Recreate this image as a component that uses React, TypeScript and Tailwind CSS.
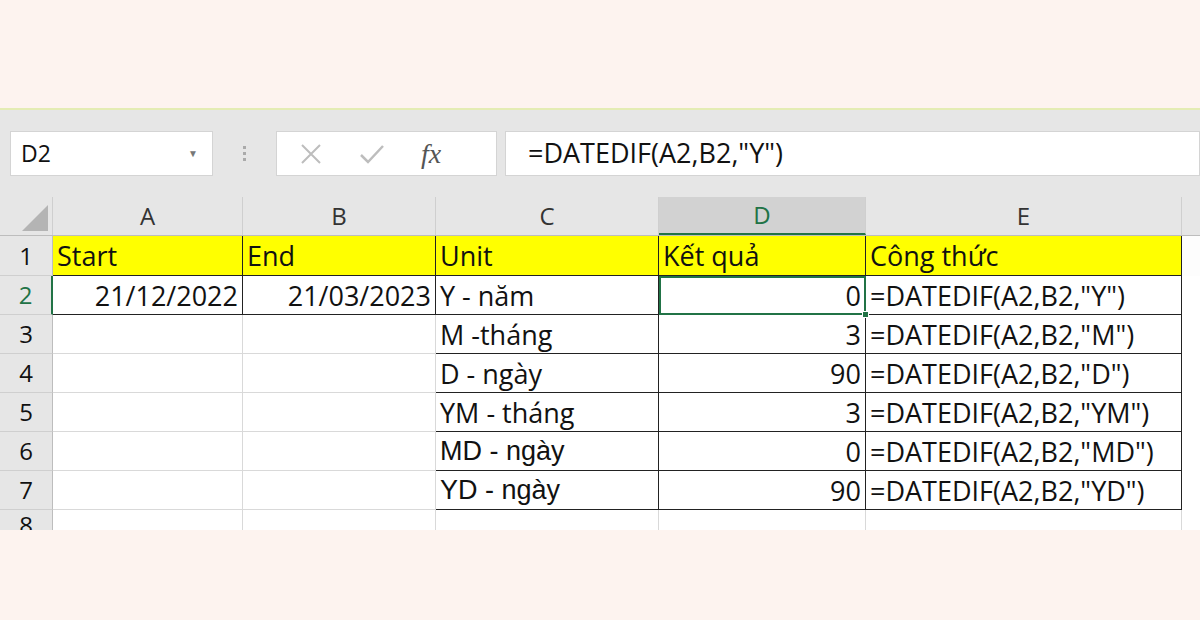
import React from "react";

const cols = [190, 193, 223, 207, 316];
const rows: { c: string[]; align: string[]; arial?: boolean }[] = [
  { c: ["21/12/2022", "21/03/2023", "Y - năm", "0", '=DATEDIF(A2,B2,"Y")'], align: ["r", "r", "l", "r", "l"] },
  { c: ["", "", "M -tháng", "3", '=DATEDIF(A2,B2,"M")'], align: ["r", "r", "l", "r", "l"] },
  { c: ["", "", "D - ngày", "90", '=DATEDIF(A2,B2,"D")'], align: ["r", "r", "l", "r", "l"] },
  { c: ["", "", "YM - tháng", "3", '=DATEDIF(A2,B2,"YM")'], align: ["r", "r", "l", "r", "l"] },
  { c: ["", "", "MD - ngày", "0", '=DATEDIF(A2,B2,"MD")'], align: ["r", "r", "l", "r", "l"], arial: true },
  { c: ["", "", "YD - ngày", "90", '=DATEDIF(A2,B2,"YD")'], align: ["r", "r", "l", "r", "l"], arial: true },
];
const font = { fontFamily: "'Open Sans', 'Liberation Sans', sans-serif" };

export default function App() {
  return (
    <div className="w-[1200px] h-[620px] bg-[#fdf3ef] overflow-hidden flex flex-col text-[#111]" style={font}>
      <div className="h-[108px] shrink-0" />
      <div className="h-[2px] bg-[#e4ecb4]" />
      <div className="h-[87px] bg-[#e6e6e6] flex items-center gap-0 pl-[10px]">
        <div className="w-[203px] h-[45px] bg-white border border-[#d4d4d4] flex items-center justify-between px-[10px]">
          <span className="text-[23px]">D2</span>
          <span className="text-[10px] text-[#777] mr-[4px]">▼</span>
        </div>
        <div className="w-[63px] flex flex-col items-center gap-[3px]">
          {[0, 1, 2].map((i) => <div key={i} className="w-[3px] h-[3px] bg-[#aaa]" />)}
        </div>
        <div className="w-[221px] h-[45px] bg-white border border-[#d4d4d4] flex items-center px-[22px] gap-[36px]">
          <svg width="24" height="24" viewBox="0 0 24 24"><path d="M3 3L21 21M21 3L3 21" stroke="#bdbdbd" strokeWidth="2" /></svg>
          <svg width="26" height="24" viewBox="0 0 26 24"><path d="M2 13L9 20L24 4" stroke="#bdbdbd" strokeWidth="2.5" fill="none" /></svg>
          <span className="text-[28px] italic text-[#555]" style={{ fontFamily: "'Liberation Serif', serif" }}>fx</span>
        </div>
        <div className="ml-[8px] flex-1 h-[45px] bg-white border border-[#d4d4d4] flex items-center px-[22px] text-[27px]">=DATEDIF(A2,B2,"Y")</div>
      </div>
      <div className="bg-white">
        <div className="flex h-[39px] bg-[#e6e6e6] border-b border-[#bdbdbd] text-[24px] text-[#333]">
          <div className="w-[53px] border-r border-[#cfcfcf] relative">
            <div className="absolute right-[4px] bottom-[4px] w-0 h-0 border-l-[26px] border-l-transparent border-b-[26px] border-b-[#b4b4b4]" />
          </div>
          {["A", "B", "C", "D", "E"].map((l, i) => (
            <div key={l} style={{ width: cols[i] }} className={`flex items-center justify-center border-r border-[#cfcfcf] ${l === "D" ? "bg-[#d2d2d2] text-[#217346] border-b-2 border-b-[#217346]" : ""}`}>{l}</div>
          ))}
          <div className="flex-1" />
        </div>
        <div className="flex h-[40px] text-[27px] leading-none">
          <div className="w-[53px] bg-[#e6e6e6] border-r border-[#bdbdbd] border-b border-b-[#cfcfcf] flex items-center justify-center text-[24px]">1</div>
          {["Start", "End", "Unit", "Kết quả", "Công thức"].map((t, i) => (
            <div key={t} style={{ width: cols[i] }} className="bg-[#ffff00] border-r border-b border-[#222] flex items-center px-[4px] whitespace-nowrap overflow-visible">{t}</div>
          ))}
          <div className="flex-1 bg-[#fdfdfd]" />
        </div>
        {rows.map((r, ri) => (
          <div key={ri} className="flex h-[39px] text-[27px] leading-none">
            <div className={`w-[53px] bg-[#e6e6e6] border-r border-b border-b-[#cfcfcf] flex items-center justify-center text-[24px] ${ri === 0 ? "bg-[#d2d2d2] text-[#217346] border-r-2 border-r-[#217346]" : "border-r-[#bdbdbd]"}`}>{ri + 2}</div>
            {r.c.map((t, ci) => {
              const dark = ci >= 2 || ri === 0;
              const sel = ri === 0 && ci === 3;
              return (
                <div key={ci} style={{ width: cols[ci], ...(r.arial && ci === 2 ? { fontFamily: "'Liberation Sans', sans-serif", fontSize: 27 } : {}) }}
                  className={`relative flex items-center px-[4px] whitespace-nowrap border-r border-b ${dark ? "border-[#222]" : "border-[#d9d9d9]"} ${r.align[ci] === "r" ? "justify-end" : ""} ${sel ? "outline-2 outline-[#217346] -outline-offset-2" : ""}`}>
                  {t}
                  {sel && <div className="absolute right-[-4px] bottom-[-4px] w-[7px] h-[7px] bg-[#217346] border border-white z-10" />}
                </div>
              );
            })}
            <div className="flex-1" />
          </div>
        ))}
        <div className="flex h-[20px] text-[24px] overflow-hidden">
          <div className="w-[53px] bg-[#e6e6e6] border-r border-[#bdbdbd] flex justify-center leading-[30px]">8</div>
          {cols.map((w, i) => <div key={i} style={{ width: w }} className="border-r border-[#d9d9d9]" />)}
        </div>
      </div>
    </div>
  );
}
